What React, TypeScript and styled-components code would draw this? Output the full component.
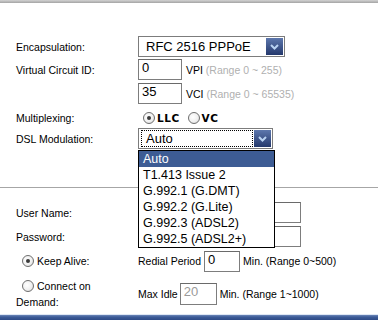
import React from "react";
import styled, { createGlobalStyle } from "styled-components";

const Global = createGlobalStyle`
  html, body { margin: 0; padding: 0; background: #fff; }
  body { width: 378px; height: 320px; overflow: hidden; font-family: "Liberation Sans", Arial, sans-serif; }
`;

const Page = styled.div`
  width: 378px;
  height: 320px;
  display: flex;
  flex-direction: column;
  position: relative;
  color: #000;
`;

const TopBar = styled.div`
  height: 3px;
  background: linear-gradient(#d2d2d2, #a4a4a4);
  flex: none;
`;

const Section = styled.div<{ $top: number }>`
  padding: ${(p) => p.$top}px 0 0 16px;
  display: flex;
  flex-direction: column;
  position: relative;
`;

const Row = styled.div<{ $h: number; $mt?: number; $align?: string }>`
  display: grid;
  grid-template-columns: 122px 1fr;
  align-items: ${(p) => p.$align || "center"};
  height: ${(p) => p.$h}px;
  margin-top: ${(p) => p.$mt || 0}px;
  position: relative;
`;

const Label = styled.div`
  font-size: 10.5px;
  line-height: 16px;
  white-space: nowrap;
`;

const WrapLabel = styled.div`
  font-size: 10.5px;
  line-height: 16px;
  margin-top: 0px;
  width: 105px;
`;

const Cell = styled.div`
  display: flex;
  align-items: center;
  height: 100%;
  position: relative;
  font-size: 10.5px;
`;

const SelectBox = styled.div<{ $w: number }>`
  width: ${(p) => p.$w}px;
  height: 21px;
  box-sizing: border-box;
  border: 1px solid #7c7c7c;
  background: #fff;
  display: flex;
  align-items: center;
  padding: 0 1px 0 2px;
  position: relative;
`;

const SelectText = styled.div<{ $focus?: boolean }>`
  flex: 1;
  height: 17px;
  box-sizing: border-box;
  font-size: 13px;
  line-height: 15px;
  padding-left: 4px;
  white-space: nowrap;
  border: 1px ${(p) => (p.$focus ? "dotted #000" : "solid transparent")};
  margin-right: 1px;
`;

const ArrowBtn = styled.svg`
  width: 17px;
  height: 17px;
  flex: none;
  display: block;
`;

const TextInput = styled.div<{ $w: number; $disabled?: boolean }>`
  width: ${(p) => p.$w}px;
  height: ${(p) => (p.$disabled ? 22 : 21)}px;
  box-sizing: border-box;
  border: 1px solid #7d7d7d;
  border-top-color: #6a6a6a;
  background: #fff;
  font-size: 13px;
  line-height: 16px;
  padding-left: 3px;
  color: ${(p) => (p.$disabled ? "#9a9a9a" : "#000")};
  flex: none;
`;

const Unit = styled.span<{ $ml: number }>`
  margin-left: ${(p) => p.$ml}px;
  font-size: 10.5px;
  white-space: nowrap;
`;

const Hint = styled.span`
  color: #b0b0b0;
`;

const RadioDot = styled.span<{ $checked?: boolean; $ml?: number; $mr?: number }>`
  display: inline-block;
  width: 12px;
  height: 12px;
  box-sizing: border-box;
  border-radius: 50%;
  border: 1px solid #6e6e6e;
  background: radial-gradient(circle at 40% 40%, #ffffff 0%, #f0f0f0 55%, #cfcfcf 100%);
  position: relative;
  vertical-align: -2px;
  margin-left: ${(p) => p.$ml || 0}px;
  margin-right: ${(p) => p.$mr || 0}px;
  flex: none;
  &::after {
    content: "";
    display: ${(p) => (p.$checked ? "block" : "none")};
    position: absolute;
    left: 3px;
    top: 3px;
    width: 4px;
    height: 4px;
    border-radius: 50%;
    background: #3a3a3a;
  }
`;

const BoldOpt = styled.span<{ $mr?: number }>`
  font-family: "DejaVu Sans", Verdana, sans-serif;
  font-weight: bold;
  font-size: 10.5px;
  letter-spacing: 0.5px;
  margin-left: 2px;
  margin-right: ${(p) => p.$mr || 0}px;
`;

const Divider = styled.div`
  height: 1px;
  background: #a6a6a6;
  margin-top: 38px;
`;

const ListBox = styled.div`
  position: absolute;
  left: 0;
  top: 22px;
  width: 137px;
  box-sizing: border-box;
  border: 1px solid #000;
  background: #fff;
  z-index: 5;
  display: flex;
  flex-direction: column;
`;

const ListItem = styled.div<{ $active?: boolean }>`
  height: 16px;
  font-size: 12.5px;
  line-height: 16px;
  padding-left: 4px;
  white-space: nowrap;
  background: ${(p) => (p.$active ? "#3d5c94" : "transparent")};
  color: ${(p) => (p.$active ? "#fff" : "#000")};
`;

const BottomBar = styled.div`
  margin-top: auto;
  height: 5px;
  flex: none;
  background: linear-gradient(#6b86b8 0px, #3d5c98 2px, #2d4a86 5px);
  border-top: 1px solid #dfe8f5;
`;

const Arrow = () => (
  <ArrowBtn viewBox="0 0 17 17">
    <defs>
      <linearGradient id="ag" x1="0" y1="0" x2="0" y2="1">
        <stop offset="0" stopColor="#5d77ad" />
        <stop offset="1" stopColor="#24386c" />
      </linearGradient>
    </defs>
    <rect x="0" y="0" width="17" height="17" fill="url(#ag)" />
    <polyline points="5,7 8.5,10.5 12,7" fill="none" stroke="#b9d2f2" strokeWidth="2" />
  </ArrowBtn>
);

const options = ["Auto", "T1.413 Issue 2", "G.992.1 (G.DMT)", "G.992.2 (G.Lite)", "G.992.3 (ADSL2)", "G.992.5 (ADSL2+)"];

export default function App() {
  return (
    <Page>
      <Global />
      <TopBar />
      <Section $top={33}>
        <Row $h={21}>
          <Label>Encapsulation:</Label>
          <Cell>
            <SelectBox $w={147}>
              <SelectText>RFC 2516 PPPoE</SelectText>
              <Arrow />
            </SelectBox>
          </Cell>
        </Row>
        <Row $h={21} $mt={2}>
          <Label>Virtual Circuit ID:</Label>
          <Cell>
            <TextInput $w={44}>0</TextInput>
            <Unit $ml={4}>VPI <Hint>(Range 0 ~ 255)</Hint></Unit>
          </Cell>
        </Row>
        <Row $h={21} $mt={3}>
          <div />
          <Cell>
            <TextInput $w={44}>35</TextInput>
            <Unit $ml={4}>VCI <Hint>(Range 0 ~ 65535)</Hint></Unit>
          </Cell>
        </Row>
        <Row $h={14} $mt={6}>
          <Label>Multiplexing:</Label>
          <Cell>
            <RadioDot $checked $ml={5} />
            <BoldOpt $mr={8}>LLC</BoldOpt>
            <RadioDot />
            <BoldOpt>VC</BoldOpt>
          </Cell>
        </Row>
        <Row $h={21} $mt={4} style={{ zIndex: 5 }}>
          <Label>DSL Modulation:</Label>
          <Cell>
            <SelectBox $w={135}>
              <SelectText $focus>Auto</SelectText>
              <Arrow />
            </SelectBox>
            <ListBox>
              {options.map((o, i) => (
                <ListItem key={o} $active={i === 0}>{o}</ListItem>
              ))}
            </ListBox>
          </Cell>
        </Row>
      </Section>
      <Divider />
      <Section $top={14}>
        <Row $h={21}>
          <Label>User Name:</Label>
          <Cell>
            <TextInput $w={163} />
          </Cell>
        </Row>
        <Row $h={21} $mt={3}>
          <Label>Password:</Label>
          <Cell>
            <TextInput $w={163} />
          </Cell>
        </Row>
        <Row $h={22} $mt={3}>
          <Label>
            <RadioDot $checked $ml={6} $mr={3} />Keep Alive:
          </Label>
          <Cell>
            Redial Period
            <Unit $ml={3} as="span" />
            <TextInput $w={36}>0</TextInput>
            <Unit $ml={3}>Min. (Range 0~500)</Unit>
          </Cell>
        </Row>
        <Row $h={22} $mt={6} $align="start">
          <WrapLabel>
            <RadioDot $ml={6} $mr={3} />Connect on Demand:
          </WrapLabel>
          <Cell>
            Max Idle
            <Unit $ml={2} as="span" />
            <TextInput $w={37} $disabled>20</TextInput>
            <Unit $ml={3}>Min. (Range 1~1000)</Unit>
          </Cell>
        </Row>
      </Section>
      <BottomBar />
    </Page>
  );
}
